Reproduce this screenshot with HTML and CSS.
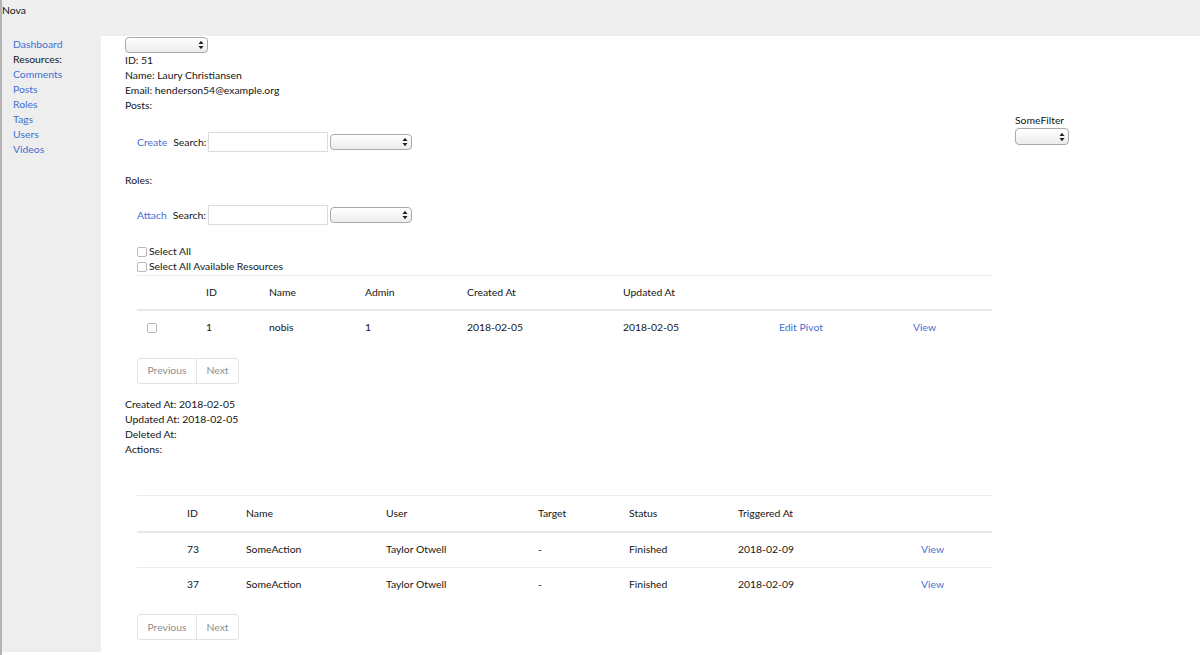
FILE: index.html
```html
<!DOCTYPE html>
<html>
<head>
<meta charset="utf-8">
<title>Nova</title>
<link rel="stylesheet" href="styles.css">
</head>
<body>
<div class="topbar">Nova</div>
<div class="layout">
  <aside class="sidebar">
    <a class="nav-link" href="#">Dashboard</a>
    <div class="nav-label">Resources:</div>
    <a class="nav-link" href="#">Comments</a>
    <a class="nav-link" href="#">Posts</a>
    <a class="nav-link" href="#">Roles</a>
    <a class="nav-link" href="#">Tags</a>
    <a class="nav-link" href="#">Users</a>
    <a class="nav-link" href="#">Videos</a>
  </aside>
  <main class="content">
    <span class="sel sel-top"><select class="sel-input"><option></option></select><svg class="sel-arrows" viewBox="0 0 6 10" width="6" height="10"><polygon points="0.5,4 3,0.8 5.5,4" /><polygon points="0.5,6 3,9.2 5.5,6" /></svg></span>
    <div class="line">ID: 51</div>
    <div class="line">Name: Laury Christiansen</div>
    <div class="line">Email: henderson54@example.org</div>
    <div class="line">Posts:</div>

    <section class="posts">
      <div class="relation">
        <div class="toolbar">
          <a class="tool-link" href="#">Create</a>
          <span class="search-label">Search:</span>
          <input class="search-input" type="text">
          <span class="sel sel-mid"><select class="sel-input"><option></option></select><svg class="sel-arrows" viewBox="0 0 6 10" width="6" height="10"><polygon points="0.5,4 3,0.8 5.5,4" /><polygon points="0.5,6 3,9.2 5.5,6" /></svg></span>
        </div>
      </div>
      <div class="filters">
        <div class="line">SomeFilter</div>
        <span class="sel sel-filter"><select class="sel-input"><option></option></select><svg class="sel-arrows" viewBox="0 0 6 10" width="6" height="10"><polygon points="0.5,4 3,0.8 5.5,4" /><polygon points="0.5,6 3,9.2 5.5,6" /></svg></span>
      </div>
    </section>

    <div class="line">Roles:</div>
    <section class="relation roles">
      <div class="toolbar">
        <a class="tool-link" href="#">Attach</a>
        <span class="search-label">Search:</span>
        <input class="search-input" type="text">
        <span class="sel sel-mid"><select class="sel-input"><option></option></select><svg class="sel-arrows" viewBox="0 0 6 10" width="6" height="10"><polygon points="0.5,4 3,0.8 5.5,4" /><polygon points="0.5,6 3,9.2 5.5,6" /></svg></span>
      </div>
      <label class="check-line"><input class="cb" type="checkbox">Select All</label>
      <label class="check-line"><input class="cb" type="checkbox">Select All Available Resources</label>
      <table class="grid grid-roles">
        <colgroup>
          <col class="c59"><col class="c63"><col class="c96"><col class="c102"><col class="c156"><col class="c156"><col class="c134"><col class="c89">
        </colgroup>
        <thead>
          <tr><th></th><th>ID</th><th>Name</th><th>Admin</th><th>Created At</th><th>Updated At</th><th></th><th></th></tr>
        </thead>
        <tbody>
          <tr><td><input class="cb" type="checkbox"></td><td>1</td><td>nobis</td><td>1</td><td>2018-02-05</td><td>2018-02-05</td><td><a class="tool-link" href="#">Edit Pivot</a></td><td><a class="tool-link" href="#">View</a></td></tr>
        </tbody>
      </table>
      <div class="pager"><button class="pg-btn pg-prev">Previous</button><button class="pg-btn pg-next">Next</button></div>
    </section>

    <div class="meta">
      <div class="line">Created At: 2018-02-05</div>
      <div class="line">Updated At: 2018-02-05</div>
      <div class="line">Deleted At:</div>
      <div class="line">Actions:</div>
    </div>

    <section class="relation actions">
      <table class="grid grid-actions">
        <colgroup>
          <col class="c40"><col class="c59"><col class="c140"><col class="c152"><col class="c91"><col class="c109"><col class="c183"><col class="c81">
        </colgroup>
        <thead>
          <tr><th></th><th>ID</th><th>Name</th><th>User</th><th>Target</th><th>Status</th><th>Triggered At</th><th></th></tr>
        </thead>
        <tbody>
          <tr><td></td><td>73</td><td>SomeAction</td><td>Taylor Otwell</td><td>-</td><td>Finished</td><td>2018-02-09</td><td><a class="tool-link" href="#">View</a></td></tr>
          <tr><td></td><td>37</td><td>SomeAction</td><td>Taylor Otwell</td><td>-</td><td>Finished</td><td>2018-02-09</td><td><a class="tool-link" href="#">View</a></td></tr>
        </tbody>
      </table>
      <div class="pager pager-actions"><button class="pg-btn pg-prev">Previous</button><button class="pg-btn pg-next">Next</button></div>
    </section>
  </main>
</div>
</body>
</html>
```
FILE: styles.css
```css
* { box-sizing: border-box; }
html, body { margin: 0; padding: 0; background: #fff; }
body {
  font-family: Lato, "Open Sans", sans-serif;
  font-size: 10.4px;
  line-height: 15px;
  color: #141414;
  border-left: 2px solid #b4b4b4;
  min-height: 655px;
}
.topbar {
  height: 36px;
  background: #efefef;
  padding: 3px 0 0 0;
  color: #111;
}
.layout { display: flex; align-items: stretch; }
.sidebar {
  width: 99px;
  background: #eeeeee;
  padding: 1px 0 0 11px;
  display: flex;
  flex-direction: column;
}
.nav-link, .nav-label { display: block; line-height: 15px; }
.nav-link { color: #3f6fd6; text-decoration: none; }
.nav-label { color: #141414; }
.content {
  flex: 1;
  padding: 0 0 12px 24px;
}
.line { line-height: 15px; }

/* selects */
.sel { position: relative; display: inline-block; vertical-align: top; }
.sel-input {
  appearance: none;
  -webkit-appearance: none;
  display: block;
  margin: 0;
  padding: 0;
  border: 1px solid #a9a9a9;
  border-radius: 4px;
  background: linear-gradient(#ffffff, #ececec);
  font: inherit;
}
.sel-arrows {
  position: absolute;
  right: 4px;
  top: 50%;
  margin-top: -5px;
  fill: #222;
  pointer-events: none;
}
.sel-top { display: block; width: 83px; margin-top: 1px; }
.sel-top .sel-input { width: 83px; height: 16px; }
.sel-mid .sel-input { width: 82px; height: 16px; }
.sel-filter .sel-input { width: 54px; height: 17px; }

/* posts section with filter column */
.posts {
  display: grid;
  grid-template-columns: 1fr 185px;
}
.relation { padding-left: 12px; }
.posts .relation { padding-top: 19px; padding-bottom: 21px; }
.toolbar {
  display: flex;
  align-items: center;
  height: 20px;
}
.tool-link { color: #3f6fd6; text-decoration: none; }
.toolbar .tool-link { margin-right: 6px; }
.search-label { margin-right: 2px; }
.search-input {
  width: 120px;
  height: 20px;
  margin: 0 2px 0 0;
  border: 1px solid #dcdcdc;
  padding: 0 3px;
  font: inherit;
}
.roles { padding-top: 17px; }
.roles .toolbar { margin-bottom: 19px; }

.check-line { display: flex; align-items: center; height: 15px; }
.cb {
  appearance: none;
  -webkit-appearance: none;
  width: 10px;
  height: 10px;
  margin: 0 2px 0 0;
  border: 1px solid #b9b9b9;
  border-radius: 2px;
  background: #fff;
}

/* tables */
.grid {
  width: 855px;
  table-layout: fixed;
  border-collapse: collapse;
  border-top: 1px solid #ececec;
}
.grid-roles { margin-top: 1px; }
.grid th, .grid td {
  text-align: left;
  font-weight: normal;
  padding: 0 0 0 10px;
  height: 35px;
  vertical-align: middle;
  white-space: nowrap;
}
.grid-roles th { height: 34px; }
.grid-actions th { height: 37px; }
.grid thead th { border-bottom: 2px solid #e8e8e8; }
.grid tbody tr + tr td { border-top: 1px solid #ececec; }
.grid td .cb { display: block; }
.c40 { width: 40px; } .c59 { width: 59px; } .c63 { width: 63px; } .c81 { width: 81px; }
.c89 { width: 89px; } .c91 { width: 91px; } .c96 { width: 96px; } .c102 { width: 102px; }
.c109 { width: 109px; } .c134 { width: 134px; } .c140 { width: 140px; } .c152 { width: 152px; }
.c156 { width: 156px; } .c183 { width: 183px; }

.pager {
  display: inline-flex;
  margin-top: 13px;
  border: 1px solid #e3e3e3;
  border-radius: 3px;
  height: 26px;
}
.pager-actions { margin-top: 12px; }
.pg-btn {
  font: inherit;
  color: #8f8f8f;
  background: #fff;
  border: 0;
  padding: 0;
  margin: 0;
  height: 24px;
}
.pg-prev { width: 59px; border-right: 1px solid #e3e3e3; border-radius: 3px 0 0 3px; }
.pg-next { width: 41px; border-radius: 0 3px 3px 0; }

.meta { margin-top: 13px; }
.actions { padding-top: 38px; }
```
